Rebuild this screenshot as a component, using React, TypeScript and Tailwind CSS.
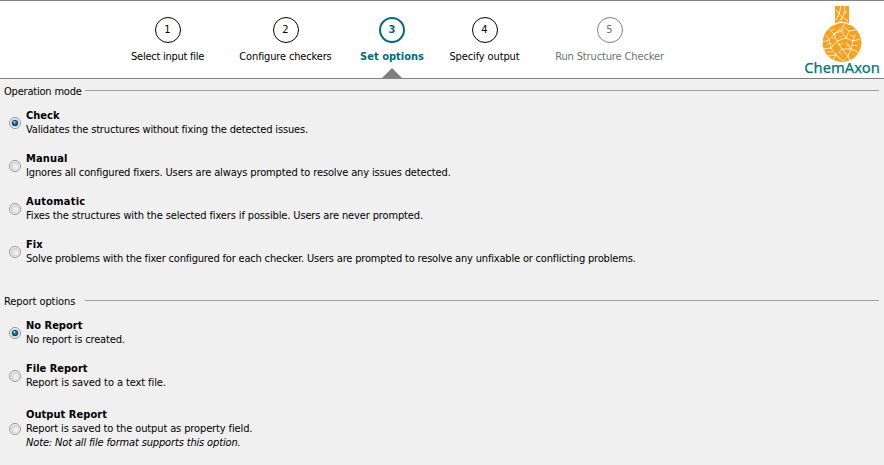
import type { ReactNode } from 'react';

type Step = { n: number; label: string; box: string; tracking: string; state: 'normal' | 'active' | 'disabled' };

const steps: Step[] = [
  { n: 1, label: 'Select input file', box: 'w-[73px] ml-[131px]', tracking: 'tracking-[-0.26px]', state: 'normal' },
  { n: 2, label: 'Configure checkers', box: 'w-[93px] ml-[35px]', tracking: 'tracking-[-0.15px]', state: 'normal' },
  { n: 3, label: 'Set options', box: 'w-[64px] ml-[28px]', tracking: 'tracking-normal', state: 'active' },
  { n: 4, label: 'Specify output', box: 'w-[71px] ml-[25px]', tracking: 'tracking-[-0.12px]', state: 'normal' },
  { n: 5, label: 'Run Structure Checker', box: 'w-[109px] ml-[35px]', tracking: 'tracking-[-0.13px]', state: 'disabled' },
];

const circleStyle = {
  normal: 'border border-black text-black',
  active: 'border-2 border-[#006b80] text-[#006b80] font-bold',
  disabled: 'border border-[#808080] text-[#707070]',
};
const labelStyle = { normal: 'text-black', active: 'text-[#006b80] font-bold', disabled: 'text-[#707070]' };

function StepItem({ step }: { step: Step }) {
  return (
    <div className={`flex h-full flex-none flex-col items-center ${step.box}`}>
      <div className={`mt-4 flex size-[26px] flex-none items-center justify-center rounded-full ${circleStyle[step.state]}`}>{step.n}</div>
      <div className={`mt-[7px] whitespace-nowrap leading-[14px] ${labelStyle[step.state]} ${step.tracking}`}>{step.label}</div>
      {step.state === 'active' && (
        <svg className="mt-auto block flex-none" width="20" height="10" viewBox="0 0 20 10"><path d="M10 0 20 10H0z" fill="#808080" /></svg>
      )}
    </div>
  );
}

function Logo() {
  return (
    <svg className="mt-1 flex-none" width="80" height="72" viewBox="804 5 80 72">
      <path d="M835 6h14v18h-14z" fill="#fba01c" />
      <circle cx="842" cy="42.7" r="19.3" fill="#fba01c" />
      <g fill="none" stroke="#fff" strokeWidth="0.8" strokeLinejoin="round">
        <path strokeWidth="1.2" d="M834 24.5q3-2 8-2t8 2" />
        <path d="M836 20l3-6 2-8M839 14l-3-4M839 14l3 3 5-6M842 17l-1 6M842 17l6 4M845 6l-1 8M837 23l4-4" />
        <path d="M823 42l6-2 5-6 7-3 3-7M834 34l-5-5M834 34l3 7 9-3 3-7 7-1M846 38l7 3 7-2M853 41l-2 8 7 3M837 41l-6 7-7 1M831 48l5 7-3 5M837 41l5 8-6 6 7 6M842 49l9 0-3 7 2 5M851 49l-5-7M841 31l5 7M829 40l2 8M848 56l-5 5M849 31l-5-4M836 55l-8 1M842 49l6 7M834 34l7-6M829 40l-3-5M853 41l2-7" />
        <path strokeWidth="0.5" d="M826 45l4-2 4 3M839 35l3 3M838 45l6-2M852 45l6 1M839 52l4 3M832 52l-5 0M852 53l3 3M845 33l-3-4M850 35l5 2M840 58l-3 3M832 38l3 0M846 46l3-1M831 31l3-2" />
      </g>
      <text x="804.3" y="73.1" textLength="75.5" lengthAdjust="spacingAndGlyphs" fill="#00747c" stroke="#00747c" strokeWidth="0.25" fontSize="15.3" fontFamily="'Noto Sans', sans-serif">ChemAxon</text>
    </svg>
  );
}

function Radio({ checked }: { checked?: boolean }) {
  return (
    <svg className="mt-px flex-none" width="12" height="12" viewBox="0 0 12 12">
      <circle cx="6" cy="6" r="5.5" fill="#f8f8f8" stroke="#949595" />
      <circle cx="6" cy="6" r="3.8" fill={checked ? '#d5dde2' : '#d9dbdd'} stroke="#c2c5c8" strokeWidth="0.6" />
      {checked ? (
        <>
          <circle cx="6" cy="6" r="3.1" fill="#0c3b5c" />
          <circle cx="5.9" cy="5.8" r="2.1" fill="#1f7fb3" />
          <circle cx="5.3" cy="5.1" r="1" fill="#8fdcf7" />
        </>
      ) : (
        <circle cx="6.7" cy="6.7" r="2.6" fill="#ededee" />
      )}
    </svg>
  );
}

type OptionProps = { title: string; titleTracking?: string; checked?: boolean; className?: string; children: ReactNode };

function Option({ title, titleTracking = '', checked, className = 'h-7', children }: OptionProps) {
  return (
    <label className={`flex items-center gap-[5px] pl-[9px] ${className}`}>
      <Radio checked={checked} />
      <div className="whitespace-nowrap pt-[2px] leading-[14px]">
        <div className={`font-bold ${titleTracking}`}>{title}</div>
        {children}
      </div>
    </label>
  );
}

function SectionTitle({ className, children }: { className: string; children: ReactNode }) {
  return (
    <div className="flex h-[14px] items-start pl-1 leading-[14px]">
      <div className={`w-[81px] flex-none whitespace-nowrap pt-px ${className}`}>{children}</div>
      <div className="mr-[5px] mt-[6px] h-px flex-1 bg-[#a0a0a0]" />
    </div>
  );
}

export default function App() {
  return (
    <div className="h-[465px] w-[884px] overflow-hidden bg-[#f0f0f0] font-['DejaVu_Sans_Condensed','DejaVu_Sans',sans-serif] text-[11px] text-black">
      <header className="flex h-[79px] border-y border-[#808080] bg-white">
        {steps.map((s) => <StepItem key={s.n} step={s} />)}
        <div className="ml-auto flex"><Logo /></div>
      </header>
      <main className="pt-[5px]">
        <SectionTitle className="tracking-[-0.2px]">Operation mode</SectionTitle>
        <div className="mt-[10px] flex flex-col gap-[15px]">
          <Option title="Check" checked>
            <div className="tracking-[-0.165px]">Validates the structures without fixing the detected issues.</div>
          </Option>
          <Option title="Manual" titleTracking="tracking-[0.15px]">
            <div className="tracking-[-0.135px]">Ignores all configured fixers. Users are always prompted to resolve any issues detected.</div>
          </Option>
          <Option title="Automatic" titleTracking="tracking-[0.25px]">
            <div className="tracking-[-0.13px]">Fixes the structures with the selected fixers if possible. Users are never prompted.</div>
          </Option>
          <Option title="Fix">
            <div className="tracking-[-0.18px]">Solve problems with the fixer configured for each checker. Users are prompted to resolve any unfixable or conflicting problems.</div>
          </Option>
        </div>
        <div className="mt-[29px]"><SectionTitle className="tracking-[-0.07px]">Report options</SectionTitle></div>
        <div className="mt-[10px] flex flex-col">
          <Option title="No Report" checked>
            <div className="tracking-[-0.14px]">No report is created.</div>
          </Option>
          <Option title="File Report" className="mt-[15px] h-7">
            <div className="tracking-[-0.09px]">Report is saved to a text file.</div>
          </Option>
          <Option title="Output Report" titleTracking="tracking-[0.05px]" className="mt-[18px] h-[42px]">
            <div className="tracking-[-0.12px]">Report is saved to the output as property field.</div>
            <div className="italic tracking-[-0.15px]">Note: Not all file format supports this option.</div>
          </Option>
        </div>
      </main>
    </div>
  );
}
